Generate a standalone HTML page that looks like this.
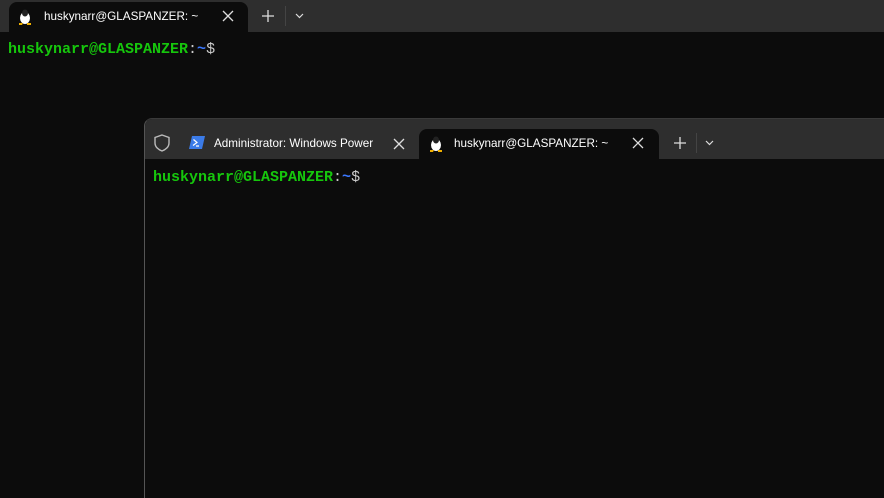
<!DOCTYPE html>
<html><head><style>
*{margin:0;padding:0;box-sizing:border-box}
body{width:884px;height:498px;background:#0c0c0c;position:relative;overflow:hidden;font-family:"Liberation Sans",sans-serif}
.bar{position:absolute;background:#2e2e2e}
.tab{position:absolute;background:#0c0c0c;border-radius:8px 8px 0 0;color:#fff;font-size:11.7px}
.t{position:absolute;white-space:nowrap}
.term{position:absolute;font-family:"Liberation Mono",monospace;font-weight:bold;font-size:15px;color:#16c60c;white-space:pre}
.b{color:#3b78ff}.w{color:#ccc;font-weight:normal}
</style></head><body>
<div class="bar" style="left:0;top:0;width:884px;height:32px"></div>
<div class="tab" style="left:9px;top:2px;width:239px;height:30px">
 <svg class="t" style="left:9px;top:7px" width="14" height="16" viewBox="0 0 14 16"><ellipse cx="7" cy="9" rx="5" ry="6" fill="#fff"/><ellipse cx="7" cy="4" rx="3" ry="3.5" fill="#222"/><path d="M1 14h4l-1 2H1zM9 14h4v2h-4z" fill="#f0b000"/></svg>
 <span class="t" style="left:35px;top:8px">huskynarr@GLASPANZER: ~</span>
 <svg class="t" style="left:213px;top:8px" width="12" height="12"><path d="M1 1L11 11M11 1L1 11" stroke="#ddd" stroke-width="1.3"/></svg>
</div>
<svg style="position:absolute;left:262px;top:10px" width="12" height="12"><path d="M6 0V12M0 6H12" stroke="#ddd" stroke-width="1.3"/></svg>
<div style="position:absolute;left:285px;top:6px;width:1px;height:20px;background:#444"></div>
<svg style="position:absolute;left:295px;top:13px" width="9" height="6"><path d="M1 1L4.5 4.5L8 1" stroke="#ddd" fill="none" stroke-width="1.2"/></svg>
<div class="term" style="left:8px;top:41px">huskynarr@GLASPANZER<span class="w">:</span><span class="b">~</span><span class="w">$</span></div>

<div style="position:absolute;left:144px;top:118px;width:740px;height:380px;background:#0c0c0c;border-left:1px solid #555;border-top:1px solid #3a3a3a;border-radius:8px 0 0 0;overflow:hidden">
 <div class="bar" style="left:0;top:0;width:740px;height:40px"></div>
 <svg style="position:absolute;left:9px;top:15px" width="16" height="18" viewBox="0 0 16 18"><path d="M8 1L15 3.5V9C15 13 11.5 15.8 8 17C4.5 15.8 1 13 1 9V3.5Z" fill="none" stroke="#bbb" stroke-width="1.4"/></svg>
 <svg style="position:absolute;left:44px;top:17px" width="16" height="13"><path d="M3 0H16L13 13H0Z" fill="#3b7be8"/><path d="M4.5 3.5L8 6.5L4 9.5M7 10H10" stroke="#fff" stroke-width="1.2" fill="none"/></svg>
 <span class="t" style="left:69px;top:18px;color:#fff;font-size:11.7px;width:165px;overflow:hidden">Administrator: Windows Power</span>
 <svg class="t" style="left:248px;top:19px" width="12" height="12"><path d="M1 1L11 11M11 1L1 11" stroke="#ddd" stroke-width="1.3"/></svg>
 <div class="tab" style="left:274px;top:10px;width:240px;height:30px">
  <svg class="t" style="left:10px;top:7px" width="14" height="16" viewBox="0 0 14 16"><ellipse cx="7" cy="9" rx="5" ry="6" fill="#fff"/><ellipse cx="7" cy="4" rx="3" ry="3.5" fill="#222"/><path d="M1 14h4l-1 2H1zM9 14h4v2h-4z" fill="#f0b000"/></svg>
  <span class="t" style="left:35px;top:8px">huskynarr@GLASPANZER: ~</span>
  <svg class="t" style="left:213px;top:8px" width="12" height="12"><path d="M1 1L11 11M11 1L1 11" stroke="#ddd" stroke-width="1.3"/></svg>
 </div>
 <svg style="position:absolute;left:529px;top:18px" width="12" height="12"><path d="M6 0V12M0 6H12" stroke="#ddd" stroke-width="1.3"/></svg>
 <div style="position:absolute;left:551px;top:14px;width:1px;height:20px;background:#444"></div>
 <svg style="position:absolute;left:560px;top:21px" width="9" height="6"><path d="M1 1L4.5 4.5L8 1" stroke="#ddd" fill="none" stroke-width="1.2"/></svg>
 <div class="term" style="left:8px;top:50px">huskynarr@GLASPANZER<span class="w">:</span><span class="b">~</span><span class="w">$</span></div>
</div>
</body></html>
